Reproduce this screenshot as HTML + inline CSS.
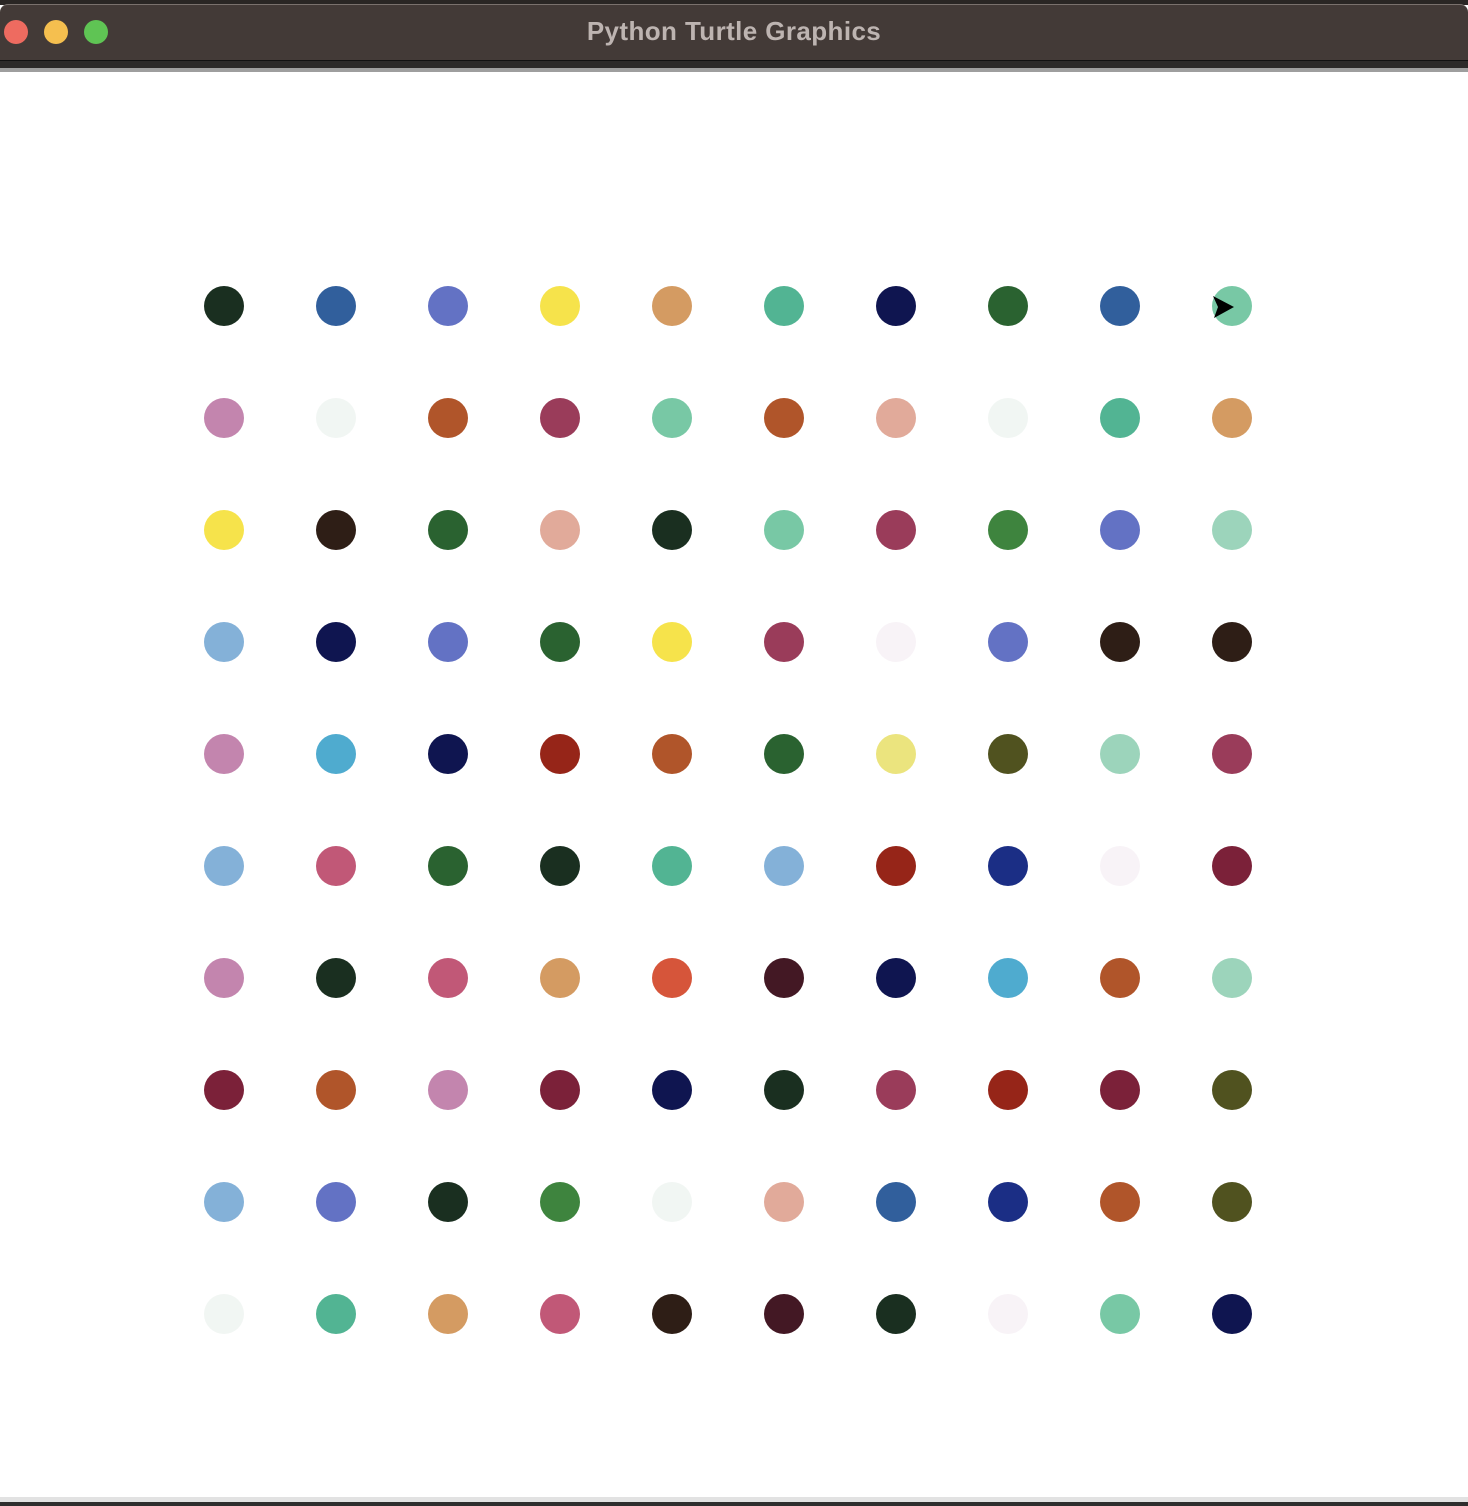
<!DOCTYPE html>
<html><head><meta charset="utf-8"><style>
html,body{margin:0;padding:0;width:1468px;height:1506px;overflow:hidden;background:#fff;position:relative;font-family:"Liberation Sans",sans-serif}
.top{position:absolute;left:0;top:0;width:1468px;height:5px;background:#2a2624}
.bar{position:absolute;left:0;top:4px;width:1468px;height:56px;background:#433a37;border-top:1px solid #7a716d;border-radius:8px 8px 0 0}
.l1{position:absolute;left:0;top:60px;width:1468px;height:8px;background:#2c2a29;border-top:1px solid #111}
.l2{position:absolute;left:0;top:68px;width:1468px;height:4px;background:#9e9e9e}
.tl{position:absolute;top:20px;width:24px;height:24px;border-radius:50%}
.title{position:absolute;left:0;width:1468px;top:16px;text-align:center;color:#bdb4b1;font-weight:bold;font-size:26px;letter-spacing:0.4px}
.d{position:absolute;width:40px;height:40px;border-radius:50%}
.b1{position:absolute;left:0;top:1497px;width:1468px;height:5px;background:#e2e2e2}
.b2{position:absolute;left:0;top:1502px;width:1468px;height:4px;background:#2e2e2e}
</style></head><body>
<div class="top"></div>
<div class="bar"></div>
<div class="tl" style="left:4px;background:#ee6b60"></div>
<div class="tl" style="left:44px;background:#f5bf4f"></div>
<div class="tl" style="left:84px;background:#5fc454"></div>
<div class="title">Python Turtle Graphics</div>
<div class="l1"></div>
<div class="l2"></div>
<div id="g"></div>
<svg style="position:absolute;left:1210px;top:294px" width="30" height="28"><polygon points="3,2 24,13 4,24 8,13" fill="#000"/></svg>
<div class="b1"></div><div class="b2"></div>
<script>
var C={A:"#1a2f20",B:"#315f9c",C:"#6372c4",D:"#f6e34b",E:"#d49b62",F:"#52b493",G:"#0f1550",H:"#2a6230",I:"#78c8a5",J:"#c385ae",K:"#f1f6f3",L:"#b0552a",M:"#9a3c5a",N:"#e1aa9a",O:"#2e1e16",P:"#3e843e",Q:"#9cd4bb",R:"#84b1d8",S:"#f8f3f7",T:"#4fabcf",U:"#962518",V:"#ebe47e",W:"#50521f",X:"#c15877",Y:"#1b2e85",Z:"#7b2139",a:"#d6553a",b:"#431824"};
var rows=["ABCDEFGHBI","JKLMILNKFE","DOHNAIMPCQ","RGCHDMSCOO","JTGULHVWQM","RXHAFRUYSZ","JAXEabGTLQ","ZLJZGAMUZW","RCAPKNBYLW","KFEXObASIG"];
var h="";
for(var j=0;j<10;j++)for(var i=0;i<10;i++){h+='<div class="d" style="left:'+(204+112*i)+'px;top:'+(286+112*j)+'px;background:'+C[rows[j][i]]+'"></div>';}
document.getElementById("g").innerHTML=h;
</script>
</body></html>
